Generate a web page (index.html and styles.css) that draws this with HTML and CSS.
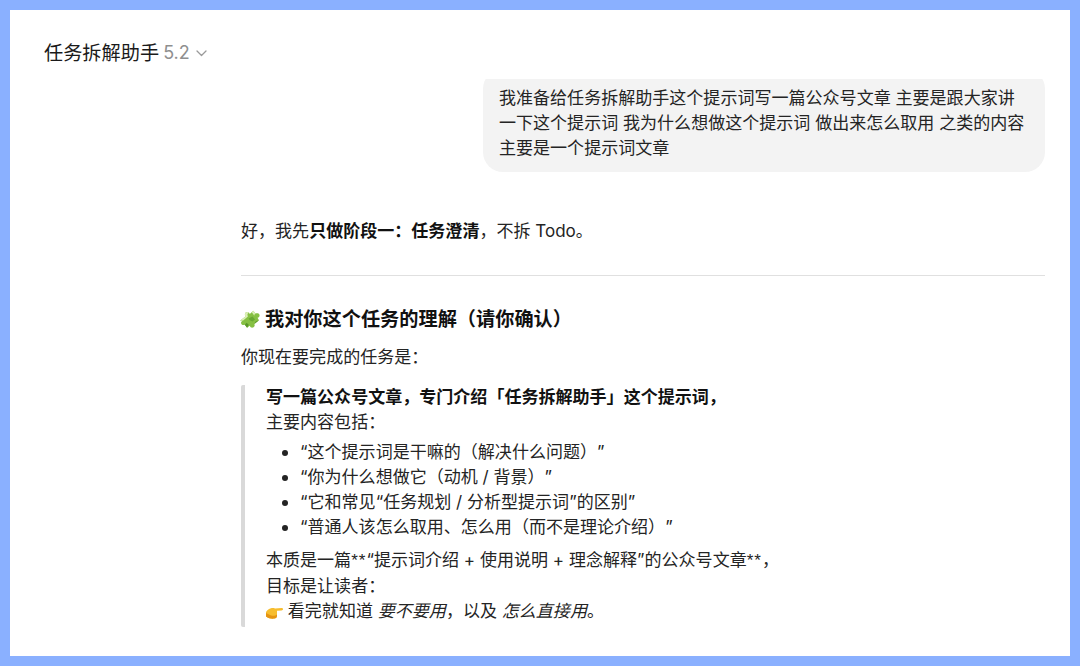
FILE: index.html
```html
<!DOCTYPE html>
<html lang="zh-CN">
<head>
    <meta charset="UTF-8">
    <title>任务拆解助手</title>
    <link rel="stylesheet" href="styles.css">
</head>
<body>
    <div class="frame">
        <div class="topbar">
            <span class="model-name">任务拆解助手</span>
            <span class="model-version">5.2</span>
            <svg class="chevron" width="11" height="7" viewBox="0 0 11 7" fill="none">
                <path d="M1 1l4.500 4.500L10 1" stroke="#9a9a9a" stroke-width="1.300" stroke-linecap="round" stroke-linejoin="round"/>
            </svg>
        </div>

        <div class="chat">
            <div class="user-row">
                <div class="bubble">我准备给任务拆解助手这个提示词写一篇公众号文章 主要是跟大家讲一下这个提示词 我为什么想做这个提示词 做出来怎么取用 之类的内容<br>主要是一个提示词文章</div>
            </div>

            <div class="answer">
                <p class="intro">好，我先<strong>只做阶段一：任务澄清</strong>，不拆 Todo。</p>
                <hr class="divider">
                <h3 class="section-title">
                    <svg class="emoji-puzzle" width="20" height="20" viewBox="0.500 1.500 19.500 18.500">
                        <path d="M0.500 12.500L5.800 8.200C4.800 6.400 5.300 4.600 6.800 4.100C8.300 3.600 9.700 4.400 10 5.900L13.500 2.800L15.600 5.500C17 4.700 18.800 5 19.400 6.300C20 7.700 19.200 9.100 17.600 9.500L19 12L14.500 15.600C15.200 17 14.700 18.500 13.300 19C11.900 19.500 10.400 18.800 10 17.300L7.400 19.400L5.200 16.300C3.800 17.100 2.200 16.700 1.700 15.400C1.200 14.100 1.800 13.100 2.800 12.600Z" fill="#86c043"/>
                        <path d="M0.500 12.500L5.800 8.200C4.800 6.400 5.300 4.600 6.800 4.100C7.800 3.800 8.600 4 9.300 4.600C7.900 4.800 7.300 6.300 8.200 8.300L3.600 12.100C2.600 12.300 1.600 12.400 0.500 12.500ZM13.500 2.800L15.600 5.500C14.800 6 14.400 6.800 14.500 7.700L12 4.100Z" fill="#dcefb8"/>
                        <path d="M8.800 10.300L12.700 8.300L15.200 11.200L12.700 13.200C11.300 12.600 9.700 12.100 8.800 10.300Z" fill="#68a832"/>
                        <path d="M5.200 16.300L7 14.300L9 16.300L7.400 19.400ZM14.500 15.600L15.800 13.300L19 12Z" fill="#5a962a"/>
                    </svg>
                    我对你这个任务的理解（请你确认）
                </h3>
                <p class="lead">你现在要完成的任务是：</p>

                <blockquote class="quote">
                    <p class="quote-first"><strong>写一篇公众号文章，专门介绍「任务拆解助手」这个提示词，</strong><br>主要内容包括：</p>
                    <ul class="quote-list">
                        <li>“这个提示词是干嘛的（解决什么问题）”</li>
                        <li>“你为什么想做它（动机 / 背景）”</li>
                        <li>“它和常见“任务规划 / 分析型提示词”的区别”</li>
                        <li>“普通人该怎么取用、怎么用（而不是理论介绍）”</li>
                    </ul>
                    <p>本质是一篇<span class="stars">**</span>“提示词介绍 + 使用说明 + 理念解释”的公众号文章<span class="stars">**</span>，<br>目标是让读者：<br>
                        <svg class="emoji-hand" width="17" height="13" viewBox="0 0 17 13">
                            <path d="M0 6C1.500 4 3 2.800 5 2.300C6.500 1.900 7.800 2 9 2.500L15.500 2.100C16.500 2.100 17 2.600 17 3.200C17 3.900 16.400 4.400 15.500 4.400L11 4.700L11 9.800C11 11.300 10 12.400 8.300 12.600C5.300 13 2.500 12.200 0 10.500Z" fill="#f7bd2e"/>
                            <path d="M0 7C2 8 4 9.300 6 9.700C8 10.100 9.800 9.600 11 8.600L11 9.800C11 11.300 10 12.400 8.300 12.600C5.300 13 2.500 12.200 0 10.500Z" fill="#e59412"/>
                        </svg>
                        看完就知道 <em>要不要用</em>，以及 <em>怎么直接用</em>。</p>
                </blockquote>
            </div>
        </div>
    </div>
</body>
</html>
```

FILE: styles.css
```css
/* General styling */
html, body {
    margin: 0;
    padding: 0;
    height: 100%;
}

body {
    font-family: "Inter", "Noto Sans CJK SC", sans-serif;
    font-size: 17.05px;
    line-height: 25px;
    color: #242424;
    background-color: #8ab0ff;
    text-spacing-trim: space-all;
}

strong, .section-title {
    color: #111;
}

.frame {
    box-sizing: border-box;
    width: 1060px;
    height: 646px;
    margin: 10px 10px 0;
    background-color: #fff;
    display: flex;
    flex-direction: column;
    overflow: hidden;
}

/* Top bar */
.topbar {
    flex: none;
    height: 69px;
    box-sizing: border-box;
    padding: 29px 0 0 34px;
    display: flex;
    align-items: flex-start;
    line-height: 28px;
}

.model-name {
    font-size: 19.2px;
    color: #1a1a1a;
}

.model-version {
    font-size: 18px;
    color: #8f8f8f;
    margin-left: 4px;
}

.chevron {
    margin: 11px 0 0 6px;
}

/* Chat column */
.chat {
    flex: 1;
    overflow: hidden;
    padding: 0 25px 0 231px;
}

.user-row {
    display: flex;
    justify-content: flex-end;
}

.bubble {
    box-sizing: border-box;
    width: 562px;
    margin-top: -10px;
    padding: 16px 16px 12px;
    background-color: #f3f3f3;
    border-radius: 20px;
}

.answer p {
    margin: 0;
}

.intro {
    padding-top: 46px;
}

.divider {
    border: none;
    height: 1px;
    background-color: #e0e0e0;
    margin: 32px 0 0;
}

.section-title {
    margin: 29px 0 0;
    font-size: 19.2px;
    line-height: 28px;
    font-weight: 600;
    display: flex;
    align-items: center;
    gap: 5px;
}

.lead {
    margin-top: 11px !important;
}

/* Quote block */
.quote {
    margin: 16px 0 0;
    padding: 1px 0 4px 21px;
    border-left: 4px solid #d9d9d9;
    border-radius: 2px;
}

.answer .quote-first {
    margin-top: -2px;
}

.quote-list {
    margin: 5px 0 8px;
    padding-left: 34px;
}

.stars {
    font-family: "Liberation Sans", sans-serif;
    letter-spacing: 1px;
}

.emoji-puzzle {
    margin-left: -1px;
}

.emoji-hand {
    vertical-align: -2px;
}
```
